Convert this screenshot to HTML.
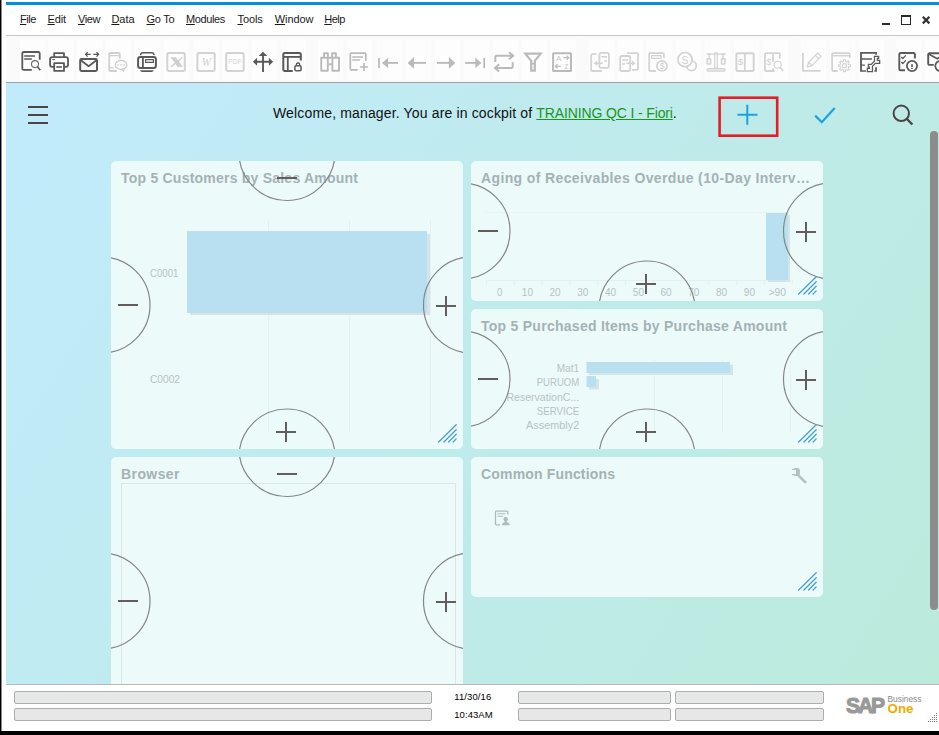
<!DOCTYPE html>
<html>
<head>
<meta charset="utf-8">
<title>SAP Business One</title>
<style>
html,body{margin:0;padding:0;}
body{width:939px;height:735px;position:relative;overflow:hidden;background:#fff;font-family:"Liberation Sans",sans-serif;}
.abs{position:absolute;}
#lb{left:0;top:0;width:1px;height:735px;background:#000;border-right:1px solid #8a8a8a;}
#bb{left:0;top:731px;width:939px;height:4px;background:#000;}
#topline{left:6px;top:2px;width:933px;height:3px;background:#0090dc;}
#menubar{left:6px;top:5px;width:933px;height:30px;background:#fff;}
#menubar span{position:absolute;top:8px;font-size:11px;line-height:13px;color:#1a1a1a;white-space:nowrap;}
#menubar u{text-decoration:underline;text-underline-offset:1px;}
#mline{left:6px;top:35px;width:933px;height:1px;background:#c6c6c6;}
#toolbar{left:6px;top:36px;width:933px;height:46px;background:#fafafa;}
#tline{left:6px;top:82px;width:933px;height:1px;background:#a0a0a0;}
#cockpit{left:6px;top:83px;width:933px;height:601px;overflow:hidden;
 background:linear-gradient(122deg,#c1ebfc 0%,#bcebdc 100%);}
#cline{left:6px;top:684px;width:933px;height:1px;background:#b9b9b9;}
.card{position:absolute;background:#ecfafa;border-radius:5px;overflow:hidden;}
.card h3{position:absolute;left:10px;top:9px;margin:0;font-size:14px;line-height:16px;font-weight:bold;color:#a4b2b5;white-space:nowrap;}
.sf{position:absolute;height:11px;background:#e7e7e7;border:1px solid #a9afaf;border-radius:2px;}
#status{left:2px;top:685px;width:937px;height:46px;background:#fff;}
.st{position:absolute;font-size:9.5px;line-height:12px;color:#000;font-family:"Liberation Sans",sans-serif;}
</style>
</head>
<body>
<div id="lb" class="abs"></div>
<div id="topline" class="abs"></div>
<div id="menubar" class="abs">
<span style="left:14px;letter-spacing:-0.45px"><u>F</u>ile</span>
<span style="left:41.500px;letter-spacing:-0.15px"><u>E</u>dit</span>
<span style="left:72px;letter-spacing:-0.4px"><u>V</u>iew</span>
<span style="left:105.400px"><u>D</u>ata</span>
<span style="left:140.500px;letter-spacing:-0.25px"><u>G</u>o To</span>
<span style="left:180px;letter-spacing:-0.38px"><u>M</u>odules</span>
<span style="left:231.500px;letter-spacing:-0.1px"><u>T</u>ools</span>
<span style="left:268.800px;letter-spacing:-0.1px"><u>W</u>indow</span>
<span style="left:318.300px;letter-spacing:-0.55px"><u>H</u>elp</span>
<svg class="abs" style="left:870px;top:8px" width="69" height="22" viewBox="876 13 69 22"><path d="M882 24h8" stroke="#2a2a2a" stroke-width="2"/><rect x="901.500" y="15.500" width="9" height="9" fill="none" stroke="#2a2a2a" stroke-width="1"/><path d="M901 16h10" stroke="#2a2a2a" stroke-width="2"/><path d="M922.800 16.800l6.600 6.600M929.400 16.800l-6.600 6.600" stroke="#333" stroke-width="2.200"/></svg>
</div>
<div id="mline" class="abs"></div>
<div id="toolbar" class="abs">
<svg class="abs" style="left:0;top:0" width="933" height="46" viewBox="6 36 933 46">
<g fill="#fdfdfd"><rect x="20" y="39" width="25" height="41"/><rect x="48" y="39" width="25" height="41"/><rect x="77" y="39" width="25" height="41"/><rect x="106" y="39" width="25" height="41"/><rect x="135" y="39" width="25" height="41"/><rect x="164" y="39" width="25" height="41"/><rect x="194" y="39" width="25" height="41"/><rect x="223" y="39" width="25" height="41"/><rect x="252" y="39" width="25" height="41"/><rect x="281" y="39" width="25" height="41"/><rect x="318" y="39" width="25" height="41"/><rect x="347" y="39" width="25" height="41"/><rect x="377" y="39" width="25" height="41"/><rect x="406" y="39" width="25" height="41"/><rect x="435" y="39" width="25" height="41"/><rect x="464" y="39" width="25" height="41"/><rect x="493" y="39" width="25" height="41"/><rect x="522" y="39" width="25" height="41"/><rect x="551" y="39" width="25" height="41"/><rect x="589" y="39" width="25" height="41"/><rect x="618" y="39" width="25" height="41"/><rect x="647" y="39" width="25" height="41"/><rect x="676" y="39" width="25" height="41"/><rect x="705" y="39" width="25" height="41"/><rect x="734" y="39" width="25" height="41"/><rect x="763" y="39" width="25" height="41"/><rect x="801" y="39" width="25" height="41"/><rect x="830" y="39" width="25" height="41"/><rect x="859" y="39" width="25" height="41"/><rect x="896" y="39" width="25" height="41"/><rect x="925" y="39" width="25" height="41"/></g>
<g fill="none" stroke="#595959" stroke-width="1.7" stroke-linejoin="round" ><path d="M39.700 59.700V53.500a1.500 1.500 0 0 0-1.500-1.500h-14.400a1.500 1.500 0 0 0-1.500 1.500v14.900a1.500 1.500 0 0 0 1.500 1.500H31.800" stroke-width="1.800"/><path d="M24.200 55.900h10.800M24.200 59h7.600" stroke-width="1.500"/><circle cx="35" cy="64.100" r="3.500" stroke-width="1.100" stroke="#6a6a6a"/><path d="M37.500 66.800L40.300 70.300" stroke-width="1.600"/></g>
<g fill="none" stroke="#595959" stroke-width="1.8" stroke-linejoin="round" ><path d="M54.200 57V53.100h9.800V57"/><rect x="50.100" y="57.100" width="17.900" height="9.700" rx="2"/><rect x="54.200" y="63.200" width="9.800" height="7.700" fill="#fff"/><path d="M56.300 67h5.600" stroke-width="1.600"/><path d="M52.300 59.600h2.700" stroke-width="1"/></g>
<g fill="none" stroke="#595959" stroke-width="1.7" stroke-linejoin="round" ><rect x="80.200" y="59.100" width="16.800" height="11.800" rx="1.300" stroke-width="2"/><path d="M80.800 60.200L88.600 66.200 96.400 60.200" stroke-width="1.800"/></g><g fill="none" stroke="#595959" stroke-width="1.3" stroke-linejoin="round" ><path d="M85.500 54.400h5.200M93.300 54.400h5.200M87.700 52.200L85.500 54.400l2.200 2.200M96.500 52.200l2.200 2.200-2.200 2.200"/></g>
<g fill="none" stroke="#d0d0d0" stroke-width="1.7" stroke-linejoin="round" ><path d="M119.800 58.500V54a1 1 0 0 0-1-1h-8.600a1 1 0 0 0-1 1v16a1 1 0 0 0 1 1h6.700" stroke-width="1.800"/><path d="M109.500 55.600h10M109.500 67.600h4" stroke-width="1.100"/></g><g fill="none" stroke="#cbcbcb" stroke-width="1.2" stroke-linejoin="round" ><ellipse cx="121" cy="64.900" rx="5.800" ry="4.500" fill="#fdfdfd"/><path d="M124.300 68.500l-.8 2.800-2.300-2" stroke-width="1.100"/></g><path d="M117.200 64.300h1.300v1.300h-1.300zM120.400 64.300h1.300v1.300h-1.300zM123.600 64.300h1.300v1.300h-1.300z" fill="#c6c6c6"/>
<g fill="none" stroke="#595959" stroke-width="1.7" stroke-linejoin="round" ><rect x="138.100" y="56.900" width="17.800" height="11.100" rx="2.300" stroke-width="2"/><path d="M140.600 54.400q.5-1.600 2.100-1.600h9.200q1.600 0 2.100 1.600" stroke-width="1.600" stroke-linecap="round"/><path d="M142.900 57v11" stroke-width="1.800"/><rect x="145.600" y="59.700" width="7.800" height="2.700" stroke-width="1.200"/></g><path d="M140 70.200h13.800q-.6 1.700-2 1.700h-9.800q-1.400 0-2-1.700z" fill="#595959"/>
<g fill="none" stroke="#d3d3d3" stroke-width="1.7" stroke-linejoin="round" ><rect x="167.300" y="53.100" width="17.500" height="17.800" rx="1.300" stroke-width="2"/></g><path d="M170.300 57.200h5.600l2.200 3 3.300-3h1.600l-4 4.300 3.800 5.500h-5.200l-2-3.100-3.500 3.100h-2l4.600-4.500z" fill="#cfcfcf"/>
<g fill="none" stroke="#d3d3d3" stroke-width="1.7" stroke-linejoin="round" ><rect x="197.400" y="53.100" width="17.300" height="17.800" rx="1.300" stroke-width="2"/></g><text x="206.200" y="65.600" font-family="Liberation Serif, serif" font-style="italic" font-size="11.500" text-anchor="middle" fill="#d2d2d2">W</text>
<g fill="none" stroke="#d3d3d3" stroke-width="1.7" stroke-linejoin="round" ><rect x="226.200" y="53.100" width="17.500" height="17.800" rx="1.300" stroke-width="2"/></g><text x="228.200" y="63.900" font-family="Liberation Sans, sans-serif" font-size="6.600" fill="#d4d4d4" textLength="13.300">PDF</text>
<g fill="none" stroke="#595959" stroke-width="1.7" stroke-linejoin="round" ><path d="M263 54v17.900M255 61.800h16" stroke-width="1.900"/></g><path d="M263 51.700l4.300 4.400h-8.600zM252.900 61.800l4.200-4v8zM273.100 61.800l-4.200-4v8z" fill="#595959"/>
<g fill="none" stroke="#595959" stroke-width="1.7" stroke-linejoin="round" ><path d="M300.800 60.600V54.600a1.500 1.500 0 0 0-1.500-1.500h-14.500a1.500 1.500 0 0 0-1.500 1.500v14.800a1.500 1.500 0 0 0 1.500 1.500h7.900" stroke-width="2"/><path d="M283.300 56.900h17.500" stroke-width="1.800"/><path d="M287.800 57v14" stroke-width="1.800"/><rect x="294.900" y="65.800" width="6.200" height="5" rx="1.200" stroke-width="1.500"/><path d="M296.300 65.500v-.8a1.700 1.700 0 0 1 3.400 0v.8" stroke-width="1.300"/></g>
<g fill="none" stroke="#bababa" stroke-width="1.9" stroke-linejoin="round" ><path d="M324.100 57.800v-4.600h3.800v4.600M332.100 57.800v-4.600h3.800v4.600"/><rect x="321.200" y="57.800" width="6.600" height="13"/><rect x="332.400" y="57.800" width="6.600" height="13"/><path d="M327.800 57.800h4.600M327.800 64.200h4.600"/></g>
<g fill="none" stroke="#bababa" stroke-width="1.7" stroke-linejoin="round" ><path d="M365.800 60.700V54.200a1 1 0 0 0-1-1h-13.500a1 1 0 0 0-1 1v14.600a1 1 0 0 0 1 1h6.400"/><path d="M352.300 57h10.700M352.300 60h7.700" stroke-width="1.400"/><path d="M360 67h8M364 63v8" stroke-width="1.700"/></g>
<g fill="none" stroke="#bababa" stroke-width="1.7" stroke-linejoin="round" ><path d="M379 57.900v10.200" stroke-width="1.800"/><path d="M386 62.900h12" stroke-width="1.900"/></g><path d="M381.900 62.900l6.200-5.100v10.200z" fill="#bababa"/>
<g fill="none" stroke="#bababa" stroke-width="1.7" stroke-linejoin="round" ><path d="M412 62.900h14" stroke-width="1.900"/></g><path d="M407.600 62.900l6.400-5.900v11.800z" fill="#bababa"/>
<g fill="none" stroke="#bababa" stroke-width="1.7" stroke-linejoin="round" ><path d="M437 62.900h14" stroke-width="1.900"/></g><path d="M455.300 62.900l-6.400-5.900v11.800z" fill="#bababa"/>
<g fill="none" stroke="#bababa" stroke-width="1.7" stroke-linejoin="round" ><path d="M465.200 62.900h12" stroke-width="1.900"/><path d="M484.200 57.900v10.200" stroke-width="1.800"/></g><path d="M481.500 62.900l-6.200-5.100v10.200z" fill="#bababa"/>
<g fill="none" stroke="#bababa" stroke-width="2" stroke-linejoin="round" ><path d="M495.300 62v-4.800a1.500 1.500 0 0 1 1.500-1.500h16M509 52.200l4.300 3.500-4.300 3.500"/><path d="M512.700 62.300v4.100a1.500 1.500 0 0 1-1.500 1.500h-16M499.200 64.300l-4.300 3.600 4.300 3.600"/></g>
<g fill="none" stroke="#bababa" stroke-width="1.7" stroke-linejoin="round" ><path d="M525.300 53.600h15.400l-5.900 7.200v9.900h-3.600v-9.900z" stroke-width="2.200" stroke-linejoin="miter"/><path d="M531 63.700h4" stroke-width="1.600"/></g>
<g fill="none" stroke="#bababa" stroke-width="1.7" stroke-linejoin="round" ><rect x="553.100" y="53.200" width="17.900" height="17.700" rx="0.500" stroke-width="2"/></g><text x="556" y="61.400" font-family="Liberation Sans, sans-serif" font-size="8" fill="#bdc9c6">A</text><text x="564.200" y="69.100" font-family="Liberation Sans, sans-serif" font-size="6.800" fill="#bdc9c6">Z</text><g fill="none" stroke="#bdbdbd" stroke-width="1.2" stroke-linejoin="round" ><path d="M563.300 57.700h5.300M566.600 55.700l2.200 2-2.200 2M560.800 66.300h-5.300M557.500 64.300l-2.200 2 2.200 2"/></g>
<g fill="none" stroke="#d3d3d3" stroke-width="1.8" stroke-linejoin="round" ><path d="M596.500 54.100h-4.300a1 1 0 0 0-1 1v14.900a1 1 0 0 0 1 1h9.600"/><rect x="599.400" y="52.800" width="9.500" height="15.100" rx="1.800"/><path d="M601.300 56.800h5.700M604.300 60.900h2.700" stroke-width="1.500"/><path d="M596.500 63.300h6.300" stroke-width="1.600"/></g><path d="M593.700 63.300l3.500-2.700v5.400z" fill="#d3d3d3"/>
<g fill="none" stroke="#d3d3d3" stroke-width="1.8" stroke-linejoin="round" ><path d="M627.200 53.100h9.800a1 1 0 0 1 1 1v14.700a1 1 0 0 1-1 1h-5"/><rect x="620.200" y="56" width="10" height="15" rx="1.800"/><path d="M622 59.900h6M622 63.900h3" stroke-width="1.500"/><path d="M626.300 63.300h6.300" stroke-width="1.600"/></g><path d="M635.600 63.300l-3.500-2.700v5.400z" fill="#d3d3d3"/>
<g fill="none" stroke="#d3d3d3" stroke-width="1.8" stroke-linejoin="round" ><path d="M663.900 58V54.100a1 1 0 0 0-1-1h-12.700a1 1 0 0 0-1 1v15.900a1 1 0 0 0 1 1h5.600"/><rect x="651.600" y="55.700" width="9.500" height="2.600" stroke-width="1.200"/><circle cx="662" cy="65.900" r="5.100" stroke-width="1.700"/></g><text x="662" y="69.200" font-family="Liberation Sans, sans-serif" font-size="8.500" text-anchor="middle" fill="#d0d0d0">$</text>
<g fill="none" stroke="#d3d3d3" stroke-width="1.7" stroke-linejoin="round" ><circle cx="691.500" cy="65.800" r="4.800"/><circle cx="685" cy="59.600" r="7.100" fill="#fdfdfd"/></g><text x="685" y="63.500" font-family="Liberation Sans, sans-serif" font-size="10.500" text-anchor="middle" fill="#d0d0d0">S</text>
<g fill="none" stroke="#d3d3d3" stroke-width="1.7" stroke-linejoin="round" ><rect x="714.700" y="52.800" width="2.600" height="15.500" stroke-width="1.200"/><path d="M706.400 54.100h19.400" stroke-width="1.200"/><path d="M707.500 54.100h3.500M721.200 54.100h3.500" stroke-width="1.800"/><path d="M709.200 54.500v4M723 54.500v4" stroke-width="1.300"/><rect x="707.200" y="58.800" width="3.300" height="5.200" stroke-width="1.600"/><rect x="721.600" y="58.800" width="3.300" height="5.200" stroke-width="1.600"/><rect x="707.200" y="68.700" width="17.800" height="2.400" rx="1.200" stroke-width="1.500"/></g>
<g fill="none" stroke="#d3d3d3" stroke-width="1.7" stroke-linejoin="round" ><rect x="736.400" y="53.200" width="17.300" height="17.700" rx="1.500" stroke-width="2"/><path d="M744.800 53v18" stroke-width="1.800"/></g><text x="740.400" y="64.700" font-family="Liberation Sans, sans-serif" font-size="9" text-anchor="middle" fill="#d0d0d0">$</text>
<g fill="none" stroke="#d3d3d3" stroke-width="1.8" stroke-linejoin="round" ><path d="M779.800 58.500V54.100a1 1 0 0 0-1-1h-12.800a1 1 0 0 0-1 1v15.900a1 1 0 0 0 1 1h8.500"/><path d="M773 53v8.800M773 68.500v2.500"/><circle cx="777.600" cy="64.700" r="3.500" stroke-width="1.100"/><path d="M780 67.300l3.200 3.600" stroke-width="1.500"/></g><text x="768.900" y="65" font-family="Liberation Sans, sans-serif" font-size="8.500" text-anchor="middle" fill="#d0d0d0">$</text>
<g fill="none" stroke="#d3d3d3" stroke-width="1.7" stroke-linejoin="round" ><path d="M802.900 53v17.900h17.600" stroke-width="1.800"/><path d="M808.600 62.300l9-9.300 3.400 3.300-9 9.300-4.700 1.300zM815.300 55.300l3.400 3.300M808.600 62.300l3.400 3.300" stroke-width="1.200"/></g>
<g fill="none" stroke="#d3d3d3" stroke-width="1.7" stroke-linejoin="round" ><path d="M849.800 58V54.100a1 1 0 0 0-1-1h-15.700a1 1 0 0 0-1 1v15.900a1 1 0 0 0 1 1h4.600" stroke-width="1.800"/><path d="M832 55.700h17.800" stroke-width="1.500"/><path d="M843.50 61.52L843.56 59.77L845.44 59.77L845.50 61.52L846.75 62.03L848.03 60.85L849.35 62.17L848.17 63.45L848.68 64.70L850.43 64.76L850.43 66.64L848.68 66.70L848.17 67.95L849.35 69.23L848.03 70.55L846.75 69.37L845.50 69.88L845.44 71.63L843.56 71.63L843.50 69.88L842.25 69.37L840.97 70.55L839.65 69.23L840.83 67.95L840.32 66.70L838.57 66.64L838.57 64.76L840.32 64.70L840.83 63.45L839.65 62.17L840.97 60.85L842.25 62.03Z" fill="#fdfdfd" stroke-width="1.100" stroke-linejoin="miter"/><circle cx="844.500" cy="65.700" r="2.100" stroke-width="1.100"/></g>
<path d="M860.100 52h16.800v2.700h-1.700v-1h-13.300v4.500h10v1.500h-10v4.700h3v1.400h-3v4.500h4v1.500h-5.800zM875.200 67.200h1.700v4.600h-2.600v-1.500h.9z" fill="#595959"/><path d="M874.460 56.300H878.650V58.470H877.320V60.370H879.680V63.420H875.410L872.440 66.270V71.600H867.310V68.480H869.320V66.840H868.370V64.440H871.230L874.460 61.320Z" fill="#fff" stroke="#595959" stroke-width="1.250" stroke-linejoin="miter"/>
<g fill="none" stroke="#595959" stroke-width="1.7" stroke-linejoin="round" ><path d="M914.900 58.500V54.300a1.300 1.300 0 0 0-1.300-1.300h-13a1.300 1.300 0 0 0-1.300 1.300v14.700a1.300 1.300 0 0 0 1.300 1.300h4.400" stroke-width="1.900"/><path d="M901.300 57l1.500 1.500 3-3.100M901.300 62l1.500 1.500 3-3.100" stroke-width="1.250"/><circle cx="912" cy="66" r="5.100" stroke-width="1.800"/><path d="M912 64.200v2.700" stroke-width="1.700"/><path d="M911 68.400h2" stroke-width="1"/></g>
<g fill="none" stroke="#595959" stroke-width="1.7" stroke-linejoin="round" ><path d="M939.500 53.300h-10a1.300 1.300 0 0 0-1.300 1.300v9a1.300 1.300 0 0 0 1.300 1.300h4.300" stroke-width="1.900"/><path d="M928.600 54l8.700 4.700 2.700-1.500" stroke-width="1.600"/><circle cx="940.400" cy="66" r="5.100" stroke-width="1.800"/></g>
</svg>
</div>
<div id="tline" class="abs"></div>
<div id="cockpit" class="abs">
 <div id="welcome" class="abs" style="left:267px;top:22px;font-size:14px;line-height:16px;color:#111;white-space:nowrap;letter-spacing:0.15px;">Welcome, manager. You are in cockpit of <span style="color:#1a961a;text-decoration:underline;letter-spacing:-0.13px;">TRAINING QC I - Fiori</span>.</div>
<svg class="abs" style="left:0;top:0" width="933" height="601" viewBox="6 83 933 601" font-family="Liberation Sans, sans-serif">
<defs>
<clipPath id="cp-c1"><rect x="111" y="161" width="352" height="288" rx="5"/></clipPath>
<clipPath id="cp-c2"><rect x="471" y="161" width="352" height="140" rx="5"/></clipPath>
<clipPath id="cp-c3"><rect x="471" y="309" width="352" height="140" rx="5"/></clipPath>
<clipPath id="cp-c4"><rect x="111" y="457" width="352" height="288" rx="5"/></clipPath>
<clipPath id="cp-c5"><rect x="471" y="457" width="352" height="140" rx="5"/></clipPath>
<g id="hdl" stroke="#4aa0da" stroke-width="1.3" stroke-linecap="round"><path d="M0.700 18L18.200 0.800M5.900 18L18.200 5.700M10.600 18L18.200 10.300M15.100 18L18.200 14.900"/></g>
</defs>
<g clip-path="url(#cp-c1)">
<rect x="111" y="161" width="352" height="288" fill="#ecfafa"/>
<path d="M268.5 220v212M349.5 220v212M430.500 220v212" stroke="#e5f1f1" stroke-width="1"/>
<rect x="190" y="234" width="240" height="81" fill="#d7e4e7"/><rect x="187" y="231" width="240" height="82" fill="#b8e0f1"/>
<g font-size="11" fill="#b8c2c4"><text x="150" y="277" textLength="28.500" lengthAdjust="spacingAndGlyphs">C0001</text><text x="150" y="383" textLength="30" lengthAdjust="spacingAndGlyphs">C0002</text></g>
<text x="121" y="183" font-size="14" font-weight="bold" fill="#a4b2b5" textLength="237" lengthAdjust="spacing">Top 5 Customers by Sales Amount</text>
<path d="M277.0 178h20" stroke="#625e5e" stroke-width="2"/>
<path d="M118 305.0h20" stroke="#625e5e" stroke-width="2"/>
<path d="M436 306.0h20M446 296.0v20" stroke="#625e5e" stroke-width="2"/>
<path d="M276.0 432h20M286.0 422v20" stroke="#625e5e" stroke-width="2"/>
<circle cx="287.0" cy="152.5" r="48" fill="none" stroke="#858585" stroke-width="1.2"/>
<circle cx="102" cy="305.0" r="48" fill="none" stroke="#858585" stroke-width="1.2"/>
<circle cx="471.5" cy="305.0" r="48" fill="none" stroke="#858585" stroke-width="1.2"/>
<circle cx="287.0" cy="457" r="48" fill="none" stroke="#858585" stroke-width="1.2"/>
<use href="#hdl" x="438" y="424"/>
</g>
<g clip-path="url(#cp-c2)">
<rect x="471" y="161" width="352" height="140" fill="#ecfafa"/>
<path d="M486 212.500h306" stroke="#e8f4f4" stroke-width="1" fill="none"/><path d="M486 280.500h306M486.5 280v5M514.3 280v5M542.1 280v5M569.9 280v5M597.7 280v5M625.5 280v5M653.3 280v5M681.1 280v5M708.9 280v5M736.7 280v5M764.5 280v5M792.3 280v5" stroke="#e5f1f1" stroke-width="1" fill="none"/>
<rect x="768" y="215" width="22" height="67" fill="#d7e4e7"/><rect x="766" y="213" width="22" height="67" fill="#b8e0f1"/>
<g font-size="11" fill="#b8c2c4"><text x="496.9" y="295.600" textLength="5.4" lengthAdjust="spacingAndGlyphs">0</text><text x="521.8" y="295.600" textLength="11.2" lengthAdjust="spacingAndGlyphs">10</text><text x="549.5" y="295.600" textLength="11.2" lengthAdjust="spacingAndGlyphs">20</text><text x="577.2" y="295.600" textLength="11.2" lengthAdjust="spacingAndGlyphs">30</text><text x="605.0" y="295.600" textLength="11.2" lengthAdjust="spacingAndGlyphs">40</text><text x="632.8" y="295.600" textLength="11.2" lengthAdjust="spacingAndGlyphs">50</text><text x="660.5" y="295.600" textLength="11.2" lengthAdjust="spacingAndGlyphs">60</text><text x="688.2" y="295.600" textLength="11.2" lengthAdjust="spacingAndGlyphs">70</text><text x="716.0" y="295.600" textLength="11.2" lengthAdjust="spacingAndGlyphs">80</text><text x="743.8" y="295.600" textLength="11.2" lengthAdjust="spacingAndGlyphs">90</text><text x="768.4" y="295.600" textLength="17.5" lengthAdjust="spacingAndGlyphs">&gt;90</text></g>
<text x="481" y="183" font-size="14" font-weight="bold" fill="#a4b2b5" textLength="329" lengthAdjust="spacing">Aging of Receivables Overdue (10-Day Interv…</text>
<path d="M478 231.0h20" stroke="#625e5e" stroke-width="2"/>
<path d="M796 232.0h20M806 222.0v20" stroke="#625e5e" stroke-width="2"/>
<path d="M636.0 284h20M646.0 274v20" stroke="#625e5e" stroke-width="2"/>
<circle cx="462" cy="231.0" r="48" fill="none" stroke="#858585" stroke-width="1.2"/>
<circle cx="831.5" cy="231.0" r="48" fill="none" stroke="#858585" stroke-width="1.2"/>
<circle cx="647.0" cy="309" r="48" fill="none" stroke="#858585" stroke-width="1.2"/>
<use href="#hdl" x="798" y="276"/>
</g>
<g clip-path="url(#cp-c3)">
<rect x="471" y="309" width="352" height="140" fill="#ecfafa"/>
<path d="M654.500 360v72M722.500 360v72M790.500 360v72" stroke="#e5f1f1" stroke-width="1"/>
<rect x="589" y="364.500" width="144" height="10.500" fill="#d7e4e7"/><rect x="586.500" y="362" width="143.500" height="11" fill="#b8e0f1"/>
<rect x="589" y="379" width="10" height="10.500" fill="#d7e4e7"/><rect x="586.500" y="376" width="9.500" height="11" fill="#b8e0f1"/>
<g font-size="11" fill="#b8c2c4"><text x="556.7" y="371.7" textLength="22.5" lengthAdjust="spacingAndGlyphs">Mat1</text><text x="536.7" y="386.2" textLength="42.5" lengthAdjust="spacingAndGlyphs">PURUOM</text><text x="506.40000000000003" y="400.8" textLength="72.8" lengthAdjust="spacingAndGlyphs">ReservationC...</text><text x="536.7" y="415" textLength="42.5" lengthAdjust="spacingAndGlyphs">SERVICE</text><text x="526.1" y="429" textLength="53.1" lengthAdjust="spacingAndGlyphs">Assembly2</text></g>
<text x="481" y="331" font-size="14" font-weight="bold" fill="#a4b2b5" textLength="306" lengthAdjust="spacing">Top 5 Purchased Items by Purchase Amount</text>
<path d="M478 379.0h20" stroke="#625e5e" stroke-width="2"/>
<path d="M796 380.0h20M806 370.0v20" stroke="#625e5e" stroke-width="2"/>
<path d="M636.0 432h20M646.0 422v20" stroke="#625e5e" stroke-width="2"/>
<circle cx="462" cy="379.0" r="48" fill="none" stroke="#858585" stroke-width="1.2"/>
<circle cx="831.5" cy="379.0" r="48" fill="none" stroke="#858585" stroke-width="1.2"/>
<circle cx="647.0" cy="457" r="48" fill="none" stroke="#858585" stroke-width="1.2"/>
<use href="#hdl" x="798" y="424"/>
</g>
<g clip-path="url(#cp-c4)">
<rect x="111" y="457" width="352" height="288" fill="#ecfafa"/>
<rect x="121.500" y="483.500" width="334" height="230" fill="none" stroke="#d9e7e7" stroke-width="1"/>
<text x="121" y="479" font-size="14" font-weight="bold" fill="#a4b2b5" textLength="58.5" lengthAdjust="spacing">Browser</text>
<path d="M277.0 474h20" stroke="#625e5e" stroke-width="2"/>
<path d="M118 601.0h20" stroke="#625e5e" stroke-width="2"/>
<path d="M436 602.0h20M446 592.0v20" stroke="#625e5e" stroke-width="2"/>
<circle cx="287.0" cy="448.5" r="48" fill="none" stroke="#858585" stroke-width="1.2"/>
<circle cx="102" cy="601.0" r="48" fill="none" stroke="#858585" stroke-width="1.2"/>
<circle cx="471.5" cy="601.0" r="48" fill="none" stroke="#858585" stroke-width="1.2"/>
</g>
<g clip-path="url(#cp-c5)">
<rect x="471" y="457" width="352" height="140" fill="#ecfafa"/>
<g fill="#b5c1c1"><path d="M791.900 468.800L794.200 468.800L794.500 468L797.900 468Q800 468.600 800 470.600L800 473.300Q800 475.400 797.900 475.900L794.200 475.900L794 475.200L791.900 475.200L791.900 474L796 474L796 470.100L791.900 470.100Z"/><path d="M797.300 476.300l1.900-1.900 7.800 7.500-1.900 1.900z"/></g>
<g fill="none" stroke="#aebbbb" stroke-width="1.300" stroke-linejoin="round"><path d="M507.800 514.500V512a.8.800 0 0 0-.8-.8h-10.700a.8.800 0 0 0-.8.800v12a.8.800 0 0 0 .8.800h3.700"/><path d="M497.300 513.700h8M497.600 516.300h5.500" stroke-width="1.100"/></g>
<g fill="#aebbbb"><circle cx="505.700" cy="519.200" r="2.200"/><rect x="504.800" y="520.500" width="1.800" height="2"/><path d="M502 525.200c0-2.200 1.700-3.300 3.700-3.300s3.800 1.100 3.800 3.300z"/></g>
<text x="481" y="479" font-size="14" font-weight="bold" fill="#a4b2b5" textLength="134" lengthAdjust="spacing">Common Functions</text>
<use href="#hdl" x="798" y="572"/>
</g>
<path d="M28 107h20M28 115h20M28 123h20" stroke="#4c4444" stroke-width="2"/>
<rect x="719.600" y="97.700" width="57.600" height="38" fill="none" stroke="#e81c24" stroke-width="2.600"/>
<path d="M737.500 114.700h20M747.300 104.800v20" stroke="#1ba3e1" stroke-width="2"/>
<path d="M815.200 115.600l6.600 6.600 12.900-14.300" fill="none" stroke="#1ba3e1" stroke-width="2.200"/>
<circle cx="901.300" cy="113.300" r="7.700" fill="none" stroke="#4a4444" stroke-width="2"/><path d="M906.800 118.900l5.600 5.600" stroke="#4a4444" stroke-width="2.200"/>
<!--C5ICONS-->
</svg>
 <div class="abs" style="left:924px;top:48px;width:8px;height:479px;border-radius:4px;background:#8c8c8c;"></div>
</div>
<div id="cline" class="abs"></div>
<div id="status" class="abs">
 <div class="sf" style="left:12px;top:6px;width:416px;"></div>
 <div class="sf" style="left:12px;top:23px;width:416px;"></div>
 <div class="sf" style="left:516px;top:6px;width:151px;"></div>
 <div class="sf" style="left:516px;top:23px;width:151px;"></div>
 <div class="sf" style="left:673px;top:6px;width:147px;"></div>
 <div class="sf" style="left:673px;top:23px;width:147px;"></div>
 <div class="st" style="left:452.200px;top:6px;letter-spacing:0.12px;">11/30/16</div>
 <div class="st" style="left:452.200px;top:24px;letter-spacing:0.08px;">10:43AM</div>
<svg class="abs" style="left:838px;top:5px" width="99" height="36" viewBox="840 690 99 36" font-family="Liberation Sans, sans-serif"><text x="846" y="712.600" font-size="22.500" font-weight="bold" fill="#999" stroke="#999" stroke-width="1.100" stroke-linejoin="round" letter-spacing="-2.300" textLength="37" lengthAdjust="spacingAndGlyphs">SAP</text><text x="887.500" y="702" font-size="9" fill="#8a8a8a" textLength="34" lengthAdjust="spacingAndGlyphs">Business</text><text x="887.500" y="712.600" font-size="12" font-weight="bold" fill="#f0ab00" textLength="26" lengthAdjust="spacingAndGlyphs">One</text><g fill="#777"><rect x="936" y="713" width="1" height="1"/><rect x="934" y="715" width="1" height="1"/><rect x="936" y="715" width="1" height="1"/><rect x="932" y="717" width="1" height="1"/><rect x="934" y="717" width="1" height="1"/><rect x="936" y="717" width="1" height="1"/><rect x="930" y="719" width="1" height="1"/><rect x="932" y="719" width="1" height="1"/><rect x="934" y="719" width="1" height="1"/><rect x="936" y="719" width="1" height="1"/><rect x="928" y="721" width="1" height="1"/><rect x="930" y="721" width="1" height="1"/><rect x="932" y="721" width="1" height="1"/><rect x="934" y="721" width="1" height="1"/><rect x="936" y="721" width="1" height="1"/></g></svg>
</div>
<div id="bb" class="abs"></div>
</body>
</html>
